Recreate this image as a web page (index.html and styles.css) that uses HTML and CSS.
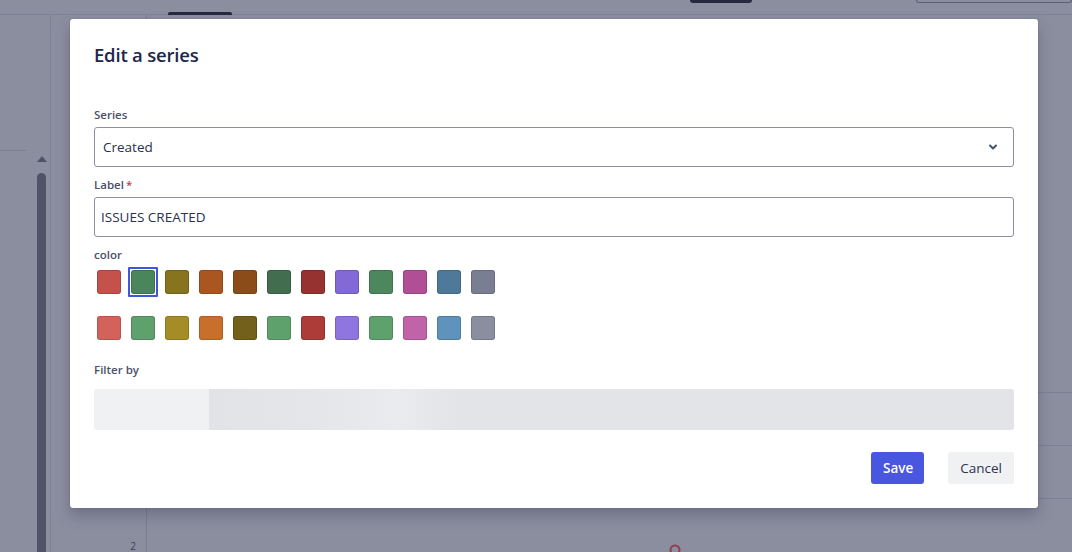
FILE: index.html
```html
<!DOCTYPE html>
<html lang="en">
<head>
<meta charset="utf-8">
<title>Edit a series</title>
<link rel="stylesheet" href="styles.css">
</head>
<body>
<div class="app">
  <header class="topbar">
    <span class="tab-indicator"></span>
    <span class="dark-block"></span>
    <span class="outline-box"></span>
  </header>
  <div class="main">
    <aside class="sidebar">
      <div class="side-rule"></div>
      <div class="scrollbar">
        <span class="scroll-arrow"></span>
        <span class="scroll-thumb"></span>
      </div>
    </aside>
    <section class="content">
      <div class="axis-col">
        <span class="axis-tick">2</span>
      </div>
      <div class="chart">
        <div class="chart-row r1"></div>
        <div class="chart-row r2"></div>
        <div class="chart-row r3"></div>
        <svg class="chart-dot" width="14" height="14" viewBox="0 0 14 14"><circle cx="7" cy="7" r="4.5" fill="none" stroke="#8f3f50" stroke-width="2"/></svg>
      </div>
    </section>
  </div>

  <div class="modal" role="dialog" aria-labelledby="modal-title">
    <h1 id="modal-title" class="modal-title">Edit a series</h1>

    <div class="field field-first">
      <label class="field-label">Series</label>
      <div class="control select">
        <span class="control-text">Created</span>
        <svg class="chevron" width="12" height="12" viewBox="0 0 12 12"><path d="M3 4.5 L6 7.5 L9 4.5" fill="none" stroke="#44546f" stroke-width="2" stroke-linecap="round" stroke-linejoin="round"/></svg>
      </div>
    </div>

    <div class="field">
      <label class="field-label">Label<span class="required">*</span></label>
      <div class="control input">
        <span class="control-text">ISSUES CREATED</span>
      </div>
    </div>

    <div class="field">
      <label class="field-label">color</label>
      <div class="swatches">
        <span class="swatch-wrap"><span class="swatch" style="background:#c4514a"></span></span>
        <span class="swatch-wrap selected"><span class="swatch" style="background:#4b855c"></span></span>
        <span class="swatch-wrap"><span class="swatch" style="background:#88731e"></span></span>
        <span class="swatch-wrap"><span class="swatch" style="background:#aa561f"></span></span>
        <span class="swatch-wrap"><span class="swatch" style="background:#8c4c19"></span></span>
        <span class="swatch-wrap"><span class="swatch" style="background:#426e4f"></span></span>
        <span class="swatch-wrap"><span class="swatch" style="background:#963330"></span></span>
        <span class="swatch-wrap"><span class="swatch" style="background:#8369d6"></span></span>
        <span class="swatch-wrap"><span class="swatch" style="background:#4d875d"></span></span>
        <span class="swatch-wrap"><span class="swatch" style="background:#b14f96"></span></span>
        <span class="swatch-wrap"><span class="swatch" style="background:#4e7999"></span></span>
        <span class="swatch-wrap"><span class="swatch" style="background:#7a7e92"></span></span>

        <span class="swatch-wrap"><span class="swatch" style="background:#d3635a"></span></span>
        <span class="swatch-wrap"><span class="swatch" style="background:#5ea16d"></span></span>
        <span class="swatch-wrap"><span class="swatch" style="background:#a68c26"></span></span>
        <span class="swatch-wrap"><span class="swatch" style="background:#c96f2c"></span></span>
        <span class="swatch-wrap"><span class="swatch" style="background:#73601a"></span></span>
        <span class="swatch-wrap"><span class="swatch" style="background:#5ea16d"></span></span>
        <span class="swatch-wrap"><span class="swatch" style="background:#ad3b37"></span></span>
        <span class="swatch-wrap"><span class="swatch" style="background:#8f75e0"></span></span>
        <span class="swatch-wrap"><span class="swatch" style="background:#5ea16d"></span></span>
        <span class="swatch-wrap"><span class="swatch" style="background:#c063a9"></span></span>
        <span class="swatch-wrap"><span class="swatch" style="background:#5f93bb"></span></span>
        <span class="swatch-wrap"><span class="swatch" style="background:#8a8e9e"></span></span>
      </div>
    </div>

    <div class="field field-filter">
      <label class="field-label">Filter by</label>
      <div class="skeleton">
        <span class="skeleton-start"></span>
        <span class="skeleton-rest"></span>
      </div>
    </div>

    <div class="actions">
      <button class="btn btn-primary" type="button">Save</button>
      <button class="btn btn-subtle" type="button">Cancel</button>
    </div>
  </div>
</div>
</body>
</html>
```

FILE: styles.css
```css
* { box-sizing: border-box; }

html, body {
  margin: 0;
  padding: 0;
}

body {
  background: #8b8e9f;
  font-family: "Open Sans", "Noto Sans", "Liberation Sans", sans-serif;
  color: #172b4d;
}

.app {
  position: relative;
  width: 1072px;
  height: 552px;
  overflow: hidden;
  display: flex;
  flex-direction: column;
}

/* ---------- dimmed background page ---------- */
.topbar {
  height: 15px;
  flex: none;
  border-bottom: 1px solid #7f8296;
  display: flex;
  align-items: flex-start;
}

.tab-indicator {
  margin-left: 168px;
  margin-top: 12px;
  width: 66px;
  height: 3px;
  border-radius: 2px 2px 0 0;
  background: #262a40;
}

.dark-block {
  margin-left: 458px;
  width: 64px;
  height: 3px;
  border-radius: 0 0 3px 3px;
  background: #262a40;
}

.outline-box {
  margin-left: 164px;
  width: 160px;
  height: 3px;
  border: 1px solid #5c5f73;
  border-top: none;
  border-radius: 0 0 4px 4px;
}

.main {
  flex: 1;
  display: flex;
}

.sidebar {
  width: 51px;
  flex: none;
  border-right: 1px solid #7f8296;
  position: relative;
  display: flex;
  flex-direction: column;
}

.side-rule {
  margin-top: 135px;
  width: 26px;
  height: 1px;
  background: #7b7e91;
}

.scrollbar {
  margin-top: 5px;
  margin-left: 37px;
  width: 9px;
  display: flex;
  flex-direction: column;
  align-items: center;
  flex: 1;
}

.scroll-arrow {
  width: 0;
  height: 0;
  border-left: 5px solid transparent;
  border-right: 5px solid transparent;
  border-bottom: 6px solid #4f5266;
}

.scroll-thumb {
  margin-top: 11px;
  width: 9px;
  flex: 1;
  border-radius: 5px 5px 0 0;
  background: #505368;
}

.content {
  flex: 1;
  display: flex;
}

.axis-col {
  width: 96px;
  flex: none;
  border-right: 1px solid #7a7d90;
  display: flex;
  justify-content: flex-end;
  align-items: flex-end;
}

.axis-tick {
  font-size: 10px;
  line-height: 10px;
  color: #3a3d55;
  margin-right: 10px;
  margin-bottom: 1px;
}

.chart {
  flex: 1;
  position: relative;
  display: flex;
  flex-direction: column;
}

.chart-row {
  height: 53px;
  border-bottom: 1px solid #7e8195;
}

.chart-row.r1 { margin-top: 325px; }

.chart-dot {
  position: absolute;
  left: 521px;
  top: 528px;
}

/* ---------- modal ---------- */
.modal {
  position: absolute;
  left: 70px;
  top: 19px;
  width: 968px;
  height: 489px;
  background: #ffffff;
  border-radius: 3px;
  box-shadow: 0 8px 14px rgba(60, 62, 85, 0.35), 0 0 2px rgba(60, 62, 85, 0.3);
  padding: 22px 24px 24px;
  display: flex;
  flex-direction: column;
}

.modal-title {
  margin: 0;
  font-size: 18.5px;
  line-height: 28px;
  font-weight: 600;
  color: #21264a;
  letter-spacing: -0.2px;
}

.field {
  display: flex;
  flex-direction: column;
  margin-top: 10px;
}

.field-first {
  margin-top: 38px;
}

.field-label {
  font-size: 11.5px;
  line-height: 16px;
  font-weight: 600;
  color: #4b5068;
  margin-bottom: 4px;
}

.required {
  color: #b9474a;
  margin-left: 2px;
}

.control {
  height: 40px;
  border: 1px solid #8c90a2;
  border-radius: 3px;
  display: flex;
  align-items: center;
  font-size: 13.5px;
  color: #2a304d;
}

.select {
  padding: 0 14px 0 8px;
  justify-content: space-between;
}

.input {
  padding: 0 6px;
}

.chevron { flex: none; }

.swatches {
  display: grid;
  grid-template-columns: repeat(12, 30px);
  column-gap: 4px;
  row-gap: 16px;
}

.swatch-wrap {
  width: 30px;
  height: 30px;
  padding: 3px;
  border-radius: 3px;
  border: 2px solid transparent;
  display: flex;
}

.swatch-wrap .swatch {
  margin: -2px;
  flex: none;
  width: 24px;
  height: 24px;
  border-radius: 3px;
  box-shadow: inset 0 0 0 1px rgba(0, 0, 0, 0.15);
}

.swatch-wrap.selected {
  border-color: #3f55dd;
  border-radius: 1px;
}

.field-filter {
  margin-top: 19px;
}

.field-filter .field-label {
  margin-bottom: 11px;
}

.skeleton {
  height: 41px;
  border-radius: 3px;
  overflow: hidden;
  display: flex;
}

.skeleton-start {
  width: 115px;
  background: #f0f1f3;
}

.skeleton-rest {
  flex: 1;
  background: linear-gradient(90deg, #e2e3e7 0px, #e4e5e9 90px, #eaebee 190px, #e3e4e8 250px, #e3e4e8 100%);
}

.actions {
  margin-top: 22px;
  display: flex;
  justify-content: flex-end;
  gap: 24px;
}

.btn {
  height: 32px;
  border: none;
  border-radius: 3px;
  font-family: inherit;
  font-size: 13.5px;
  font-weight: 600;
  padding: 0 12px;
  cursor: pointer;
}

.btn-primary {
  width: 53px;
  background: #4956e0;
  color: #ffffff;
}

.btn-subtle {
  width: 66px;
  background: #f0f1f3;
  color: #2c3350;
  font-weight: 500;
}
```
